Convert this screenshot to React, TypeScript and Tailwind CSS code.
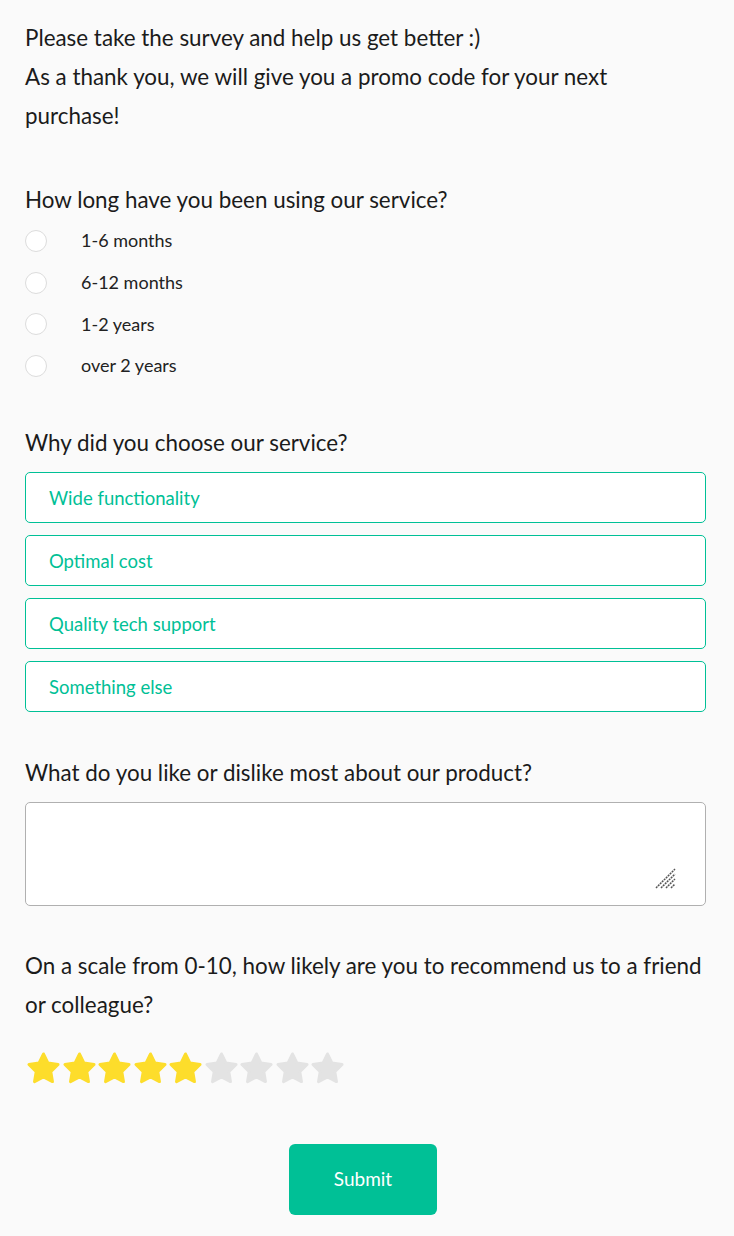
import { useState } from "react"

const options = ["1-6 months", "6-12 months", "1-2 years", "over 2 years"]
const reasons = ["Wide functionality", "Optimal cost", "Quality tech support", "Something else"]

function Star({ filled }: { filled: boolean }) {
  const color = filled ? "#fddd2b" : "#e3e3e3"
  return (
    <svg width="35" height="35" viewBox="0 0 24 24" className="shrink-0">
      <polygon
        points="12,2 15.09,8.26 22,9.27 17,14.14 18.18,21.02 12,17.77 5.82,21.02 7,14.14 2,9.27 8.91,8.26"
        fill={color}
        stroke={color}
        strokeWidth="2"
        strokeLinejoin="round"
      />
    </svg>
  )
}

export default function App() {
  const [rating] = useState(5)

  return (
    <div
      className="min-h-[1236px] w-[734px] bg-[#fafafa] pl-[25px] pr-[28px] pt-[18px] text-[#1b1b1b]"
      style={{ fontFamily: "Lato, 'Liberation Sans', sans-serif" }}
    >
      <p className="text-[22.4px] leading-[39px]">
        Please take the survey and help us get better :)
        <br />
        As a thank you, we will give you a promo code for your next
        <br />
        purchase!
      </p>

      {/* question 1 */}
      <h2 className="mt-[45px] text-[22.4px] leading-[39px]">How long have you been using our service?</h2>
      <div className="mt-[1px] flex flex-col">
        {options.map((o) => (
          <label key={o} className="flex h-[41.7px] items-center">
            <span className="h-[22px] w-[22px] rounded-full border border-[#dcdcdc] bg-white" />
            <span className="ml-[34px] text-[18px] text-[#222]">{o}</span>
          </label>
        ))}
      </div>

      {/* question 2 */}
      <h2 className="mt-[36px] text-[22.4px] leading-[39px]">Why did you choose our service?</h2>
      <div className="mt-[10px] flex flex-col gap-[12px]">
        {reasons.map((r) => (
          <div
            key={r}
            className="flex h-[51px] items-center rounded-[5px] border border-[#00c096] bg-white pl-[23px] pt-[3px] text-[18.5px] text-[#00c096]"
          >
            {r}
          </div>
        ))}
      </div>

      {/* question 3 */}
      <h2 className="mt-[41px] text-[22.4px] leading-[39px]">What do you like or dislike most about our product?</h2>
      <div className="relative mt-[10px]">
        <textarea className="block h-[104px] w-full resize-none rounded-[5px] border border-[#b0b0b0] bg-white p-3 outline-none" />
        <svg
          width="22"
          height="22"
          viewBox="0 0 22 22"
          className="pointer-events-none absolute bottom-[17px] right-[29px]"
          stroke="#555"
          strokeWidth="1.5"
          strokeDasharray="2 0.8"
        >
          <line x1="1" y1="21" x2="20" y2="2" />
          <line x1="6" y1="21" x2="20" y2="7" />
          <line x1="11" y1="21" x2="20" y2="12" />
          <line x1="16" y1="21" x2="20" y2="17" />
        </svg>
      </div>

      {/* question 4 */}
      <h2 className="mt-[40px] text-[22.4px] leading-[39px]">
        On a scale from 0-10, how likely are you to recommend us to a friend or colleague?
      </h2>
      <div className="ml-[1px] mt-[27px] flex gap-[0.5px]">
        {Array.from({ length: 9 }).map((_, i) => (
          <Star key={i} filled={i < rating} />
        ))}
      </div>

      <div className="mt-[58px] flex justify-center pr-[5px]">
        <button className="h-[71px] w-[148px] rounded-[6px] bg-[#00c096] text-[19px] text-white">Submit</button>
      </div>
    </div>
  )
}
